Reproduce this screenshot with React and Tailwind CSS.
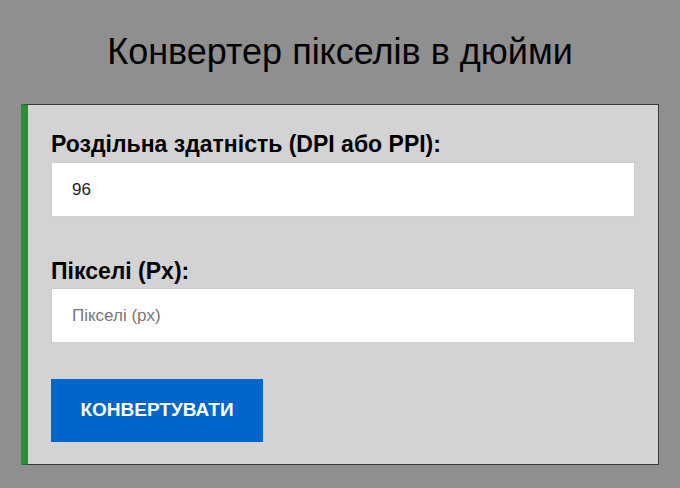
import React, { useState } from 'react';

const App = () => {
  const [dpi, setDpi] = useState('96');
  const [px, setPx] = useState('');

  return (
    <div className="min-h-[488px] bg-[#8f8f8f] font-['Liberation_Sans',Arial,sans-serif] px-[21px] pt-[31px] pb-[23px]">
      <h1 className="text-center text-[36px] leading-[41px] text-black mb-[32px]">
        Конвертер пікселів в дюйми
      </h1>
      <div className="bg-[#d3d3d3] border border-[#3a3a3a] border-l-[7px] border-l-[#27922f] pl-[23px] pr-[23px] pt-[26px] pb-[22px]">
        <label className="block text-[23px] leading-[26px] font-bold text-black mb-[5px]">
          Роздільна здатність (DPI або PPI):
        </label>
        <input
          value={dpi}
          onChange={(e) => setDpi(e.target.value)}
          className="block w-full h-[55px] bg-white border border-[#cfcfcf] px-[20px] text-[17px] text-[#222] outline-none"
        />
        <label className="block text-[23px] leading-[26px] font-bold text-black mt-[41px] mb-[4px]">
          Пікселі (Px):
        </label>
        <input
          value={px}
          onChange={(e) => setPx(e.target.value)}
          placeholder="Пікселі (px)"
          className="block w-full h-[55px] bg-white border border-[#cfcfcf] px-[20px] text-[17px] text-[#222] placeholder:text-[#777] outline-none"
        />
        <button className="mt-[36px] h-[63px] w-[212px] bg-[#0066cc] text-white font-bold text-[19px] uppercase">
          Конвертувати
        </button>
      </div>
    </div>
  );
};

export default App;
